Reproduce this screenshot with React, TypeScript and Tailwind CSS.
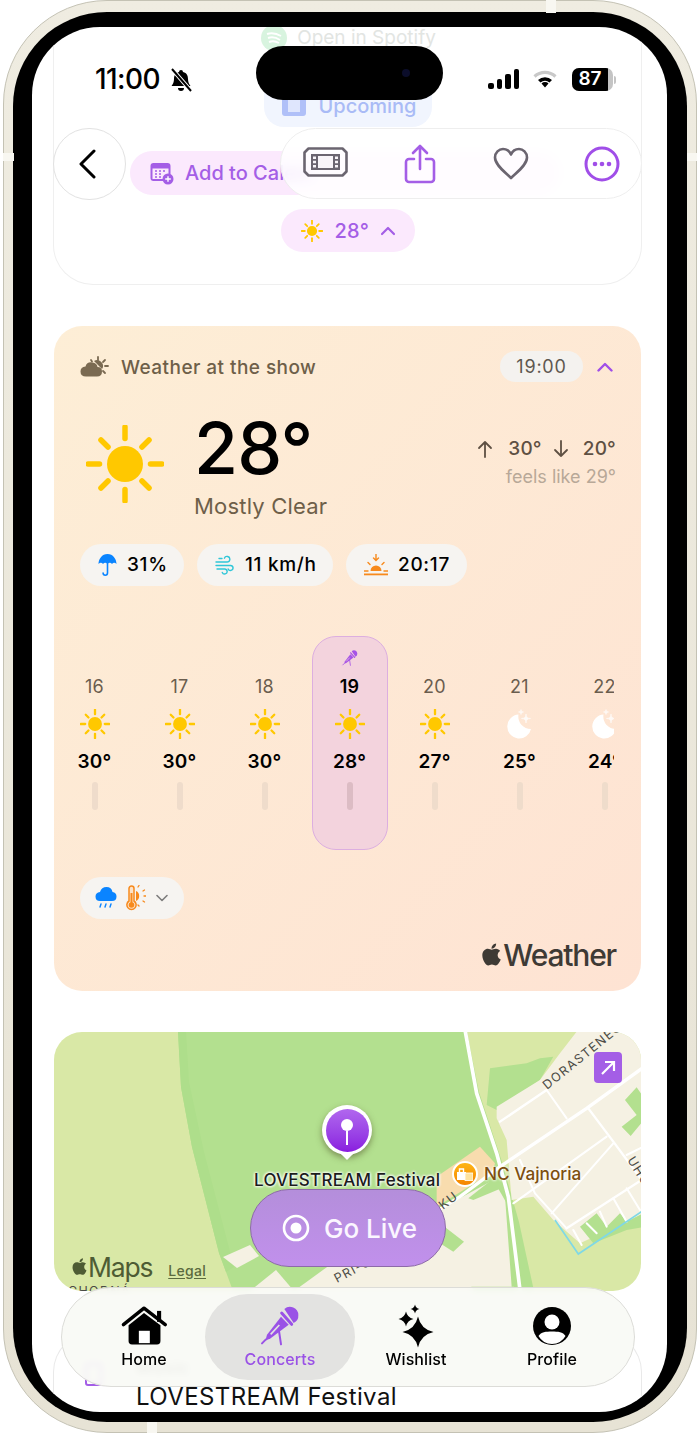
import React from "react";
import { FaApple } from "react-icons/fa";

const Sun = ({ s = 30, rw = 2.4 }: { s?: number; rw?: number }) => (
  <svg width={s} height={s} viewBox="0 0 78 78" className="shrink-0">
    <circle cx="39" cy="39" r="18" fill="#ffc800" />
    {[0, 45, 90, 135, 180, 225, 270, 315].map((a) => (
      <line key={a} x1="39" y1={a % 90 === 0 ? 13.5 : 15} x2="39" y2={a % 90 === 0 ? 2 : 5} stroke="#ffc800" strokeWidth={rw * (78 / s)} strokeLinecap="round" transform={`rotate(${a} 39 39)`} />
    ))}
  </svg>
);

const Moon = () => (
  <svg width="30" height="30" viewBox="0 0 30 30" className="shrink-0">
    <path d="M13.500 5.500 A12 12 0 1 0 26 20 A12.500 12.500 0 0 1 13.500 5.500 Z" fill="#fff" />
    <path d="M21 5 Q21 9.500 25.500 9.500 Q21 9.500 21 14 Q21 9.500 16.500 9.500 Q21 9.500 21 5Z M16 0.500 Q16 3 18.500 3 Q16 3 16 5.500 Q16 3 13.500 3 Q16 3 16 0.500Z" fill="#fff" stroke="#fff" strokeWidth="0.7" opacity="0.8" />
  </svg>
);

const Star = ({ cx, cy, r }: { cx: number; cy: number; r: number }) => {
  const k = r * 0.18;
  return <path d={`M${cx} ${cy - r} Q${cx + k} ${cy - k} ${cx + r} ${cy} Q${cx + k} ${cy + k} ${cx} ${cy + r} Q${cx - k} ${cy + k} ${cx - r} ${cy} Q${cx - k} ${cy - k} ${cx} ${cy - r}Z`} fill="#000" />;
};

const Mic = ({ w = 50, c = "#9a52e6", g = "#e3e3e1" }: { w?: number; c?: string; g?: string }) => (
  <svg width={w} height={w} viewBox="0 0 150 150" className="shrink-0">
    <path d="M88 24 A25 25 0 0 1 130 42 A25 25 0 0 1 116 66Z" fill={c} />
    <path d="M80 36 L110 70" stroke={c} strokeWidth="9" strokeLinecap="round" />
    <path d="M78 47 L101 71 L47 112 L31 119 L36 101Z" fill={c} />
    <path d="M47 100 L73 72" stroke={g} strokeWidth="5" />
    <path d="M32 116 L21 127 M72 90 L78 130" stroke={c} strokeWidth="6" strokeLinecap="round" />
  </svg>
);

const Pill = ({ children, w }: { children: React.ReactNode; w: string }) => (
  <div className={`flex h-[42px] items-center rounded-[21px] bg-[#f6f4f1] ${w}`}>{children}</div>
);

const hours = [
  ["16", "30°", "sun"],
  ["17", "30°", "sun"],
  ["18", "30°", "sun"],
  ["19", "28°", "sun"],
  ["20", "27°", "sun"],
  ["21", "25°", "moon"],
  ["22", "24°", "moon"],
];

const MapArt = () => (
  <svg viewBox="0 0 587 259" width="587" height="259" className="block">
    <rect width="587" height="259" fill="#d9e8a6" />
    <path d="M124 0 L127 55 L138 115 L165 221 L179 259 L480 259 L465 190 L448 130 L425 60 L413 0Z" fill="#b3e08f" />
    <path d="M124 0 L127 55 L138 115 L165 221 L172 240 L180 235 L150 120 L135 50 L132 0Z" fill="#aede8b" />
    <g fill="#f5f1e3">
      <path d="M169 225 L196 213 L205 224 L183 236Z" />
      <path d="M196 259 L222 238 L240 259Z" />
      <path d="M240 259 L280 230 L400 225 L420 259Z" />
    </g>
    <path d="M400 232 L416 222 L432 259 L424 259Z" fill="#b3e08f" />
    <g transform="translate(386 -2) scale(0.3333)">
      <path d="M140 225 L150 115 L260 100 L300 85 L340 80 L300 150 L170 240Z" fill="#b3e08f" />
      <path d="M410 5 L620 5 L620 545 L560 575 L420 640 L340 570 L280 500 L215 510 L200 330 L170 265 L170 230 L300 150 L360 70Z" fill="#f5f1e3" />
      <path d="M-60 570 L160 450 L200 520 L222 770 L-60 770Z" fill="#f5f1e3" />
      <path d="M0 580 L72 635 L40 665 L0 640Z" fill="#b3e08f" />
      <path d="M-10 440 L120 350 L165 400 L158 425 L-10 530Z" fill="#f8dcae" />
      <path d="M85 505 L180 430 L195 470 L100 510Z" fill="#b3e08f" />
      <path d="M185 400 L205 500 L240 770 L215 770 L195 500Z" fill="#b3e08f" />
      <path d="M555 210 L590 172 L620 215 L620 260 L572 318 L545 290 L590 255Z" fill="#b3e08f" />
      <path d="M420 590 L470 550 L500 590 L540 550 L560 575 L620 545 L620 590 L560 600 L460 640Z" fill="#b3e08f" />
      <g fill="none" stroke="#fff" strokeLinecap="round" strokeLinejoin="round">
        <path d="M75 0 L110 190 L170 370 L205 500 L240 780" strokeWidth="11" />
        <path d="M-60 575 L60 500 L180 410 L440 235 L620 105" strokeWidth="10" />
        <path d="M180 275 L320 180" strokeWidth="7" />
        <path d="M320 180 L380 265" strokeWidth="6" />
        <path d="M445 235 L520 335 L620 470" strokeWidth="7" />
        <path d="M240 390 L285 490 L380 595" strokeWidth="6" />
        <path d="M220 520 L500 320" strokeWidth="6" />
        <path d="M335 550 L520 340" strokeWidth="6" />
        <path d="M380 595 L620 440" strokeWidth="7" />
        <path d="M560 375 L620 345" strokeWidth="6" />
        <path d="M400 600 L425 645 M440 580 L470 610 M480 545 L500 590 M520 505 L560 575 M560 475 L600 540" strokeWidth="6" />
      </g>
      <path d="M345 570 L415 672 L605 545" fill="none" stroke="#7fd8e6" strokeWidth="5" />
    </g>
    <g fontFamily="Inter, sans-serif" fontSize="12.5" fill="#4b4b45" letterSpacing="1.3">
      <text transform="translate(493 58) rotate(-39)">DORASTENECKÁ</text>
      <text transform="translate(573 128) rotate(58)">UHO</text>
      <text transform="translate(389 178) rotate(-38)">KU</text>
      <text transform="translate(283 251) rotate(-28)">PRI-S</text>
      <text transform="translate(14 264)">CHODNÁ</text>
    </g>
  </svg>
);

const strip = "absolute bg-[#f8f7f1]";

export default function App() {
  return (
    <div className="relative h-[1435px] w-[700px] overflow-hidden bg-white text-black [font-family:Inter,sans-serif]">
      <div className="ml-[3px] h-[1433px] w-[694px] rounded-[104px] border border-[#c4c2b4] bg-gradient-to-b from-[#efece1] to-[#e7e3d5] px-[9px] pb-[10px] pt-[11px]">
        <div className="h-[1410px] w-[674px] rounded-[94px] bg-black px-[19px] pt-[15px]">
          <div className="relative h-[1385px] w-[635px] overflow-hidden rounded-[68px] bg-white">
            {/* top card */}
            <div className="ml-[21px] flex h-[258px] w-[589px] flex-col items-center rounded-b-[40px] border border-t-0 border-[#efefef]">
              <div className="mt-[1px] flex h-[20px] items-center gap-[10px] pl-[2px] text-[19px] text-[#dfe3df] opacity-90">
                <svg width="26" height="26" viewBox="0 0 26 26"><circle cx="13" cy="13" r="13" fill="#d4f3dc" /><path d="M6 9 Q13 7 20 11 M7 13 Q13 11 19 15 M8 17 Q13 15 18 18" stroke="#fff" strokeWidth="2" fill="none" /></svg>
                <span>Open in Spotify</span>
              </div>
              <div className="mt-[37px] flex h-[42px] w-[168px] items-center justify-center gap-[12px] rounded-b-[20px] bg-[#f1f5fe] pl-[4px] text-[20px] font-medium text-[#a9bbf6]">
                <svg width="24" height="22" viewBox="0 0 24 22"><rect x="0" y="1" width="24" height="20" rx="3" fill="#b0c0f8" /><rect x="6" y="5" width="12" height="12" fill="#dfe6fd" /></svg>
                <span>Upcoming</span>
              </div>
              <div className="ml-[-31px] mt-[24px] flex self-start">
                <div className="ml-[107px] flex h-[44px] w-[181px] items-center gap-[11px] rounded-l-[22px] bg-[#fbe9fd] pb-[1px] pl-[20px] text-[20px] font-medium text-[#a45ee6]">
                  <svg width="24" height="24" viewBox="0 0 24 24" className="shrink-0"><rect x="0.5" y="2" width="20" height="18" rx="3" fill="#a45ee6" /><rect x="2.5" y="7.500" width="16" height="10.500" fill="#fbe9fd" /><path d="M5 10h2M9 10h2M13 10h2M5 13h2M9 13h2M5 16h2M9 16h2" stroke="#a45ee6" strokeWidth="1.6" /><circle cx="18" cy="18" r="5.500" fill="#a45ee6" /><path d="M18 15.200v5.600M15.200 18h5.600" stroke="#fff" strokeWidth="1.4" /></svg>
                  <span className="whitespace-nowrap">Add to Calendar</span>
                </div>
                <div className="h-[44px] w-[250px] rounded-r-[22px] bg-[#fbe9fd]" />
              </div>
              <div className="mt-[14px] flex h-[43px] w-[134px] items-center rounded-[22px] bg-[#fbe9fd] pl-[20px] text-[20px] font-medium tracking-[0.3px] text-[#a45ee6]">
                <Sun s={22} rw={1.8} />
                <span className="ml-[12px]">28°</span>
                <svg width="16" height="10" viewBox="0 0 16 10" className="ml-[11px]"><path d="M2 8 L8 2 L14 8" fill="none" stroke="#a45ee6" strokeWidth="2.2" strokeLinecap="round" strokeLinejoin="round" /></svg>
              </div>
            </div>

            {/* weather card */}
            <div className="ml-[22px] mt-[41px] h-[665px] w-[587px] rounded-[28px] bg-gradient-to-br from-[#fdeed6] to-[#fee3d3] pl-[26px] pt-[25px]">
              <div className="flex h-[31px] items-center pr-[27px]">
                <svg width="30" height="22" viewBox="0 0 30 22" className="mr-[12px] shrink-0">
                  <path d="M6 20.500 Q0.500 20.500 0.500 15.500 Q0.500 11 5.500 10.500 Q7 5.500 12.500 6.500 Q17 7 17.500 11 Q22 11 22 15.500 Q22 20.500 17 20.500Z" fill="#7a6a52" />
                  <path d="M14 5 A6 6 0 0 1 23 11 A 6 6 0 0 1 22 13" fill="#7a6a52" />
                  <path d="M18 1v3M25 4l-2 2M28 10h-3M25 17l-2-2M11 4l1 1.500" stroke="#7a6a52" strokeWidth="1.8" strokeLinecap="round" />
                </svg>
                <span className="relative top-[1.5px] -ml-[1px] text-[19px] font-medium tracking-[0.45px] text-[#6e5f49]">Weather at the show</span>
                <div className="ml-auto flex h-[31px] w-[83px] items-center justify-center rounded-[16px] bg-[#f4f2ef] text-[18px] tracking-[0.8px] text-[#5e5850]">19:00</div>
                <svg width="16" height="10" viewBox="0 0 16 10" className="ml-[14px] mr-[1px]"><path d="M1.500 8.500 L8 2 L14.500 8.500" fill="none" stroke="#a04ee8" strokeWidth="2.4" strokeLinecap="round" strokeLinejoin="round" /></svg>
              </div>

              <div className="mt-[29px] flex h-[117px] pr-[25px]">
                <div className="ml-[6px] mt-[14px] w-[108px]"><Sun s={78} rw={5.5} /></div>
                <div>
                  <div className="mt-[1px] h-[72px] text-[71.5px] font-medium leading-[72px] tracking-[-0.8px]">28°</div>
                  <div className="mt-[8px] text-[22px] leading-[28px] tracking-[0.2px] text-[#6e5f49]">Mostly Clear</div>
                </div>
                <div className="ml-auto pt-[25px] text-right">
                  <div className="flex h-[26px] items-center justify-end text-[19px] font-medium tracking-[0.2px] text-[#5e5043]">
                    <svg width="16" height="18" viewBox="0 0 16 18"><path d="M8 17V2M2 8l6-6 6 6" fill="none" stroke="#5e5043" strokeWidth="1.8" strokeLinecap="round" strokeLinejoin="round" /></svg>
                    <span className="ml-[15px]">30°</span>
                    <svg width="16" height="18" viewBox="0 0 16 18" className="ml-[11px]"><path d="M8 1v15M2 10l6 6 6-6" fill="none" stroke="#5e5043" strokeWidth="1.8" strokeLinecap="round" strokeLinejoin="round" /></svg>
                    <span className="ml-[14px]">20°</span>
                  </div>
                  <div className="mt-[2px] text-[18px] leading-[26px] text-[#b8a898]">feels like 29°</div>
                </div>
              </div>

              <div className="mt-[16px] flex gap-[13px] text-[19px] font-medium tracking-[0.7px]">
                <Pill w="w-[104px] pl-[18px] gap-[10px]">
                  <svg width="19" height="24" viewBox="0 0 19 24" className="shrink-0"><path d="M9.500 1 C15 1 18.500 6 18.500 11 Q16 8.500 14 11 Q12 8.500 9.500 11 Q7 8.500 5 11 Q3 8.500 0.500 11 C0.500 6 4 1 9.500 1Z" fill="#0a84ff" /><path d="M9.500 10v10a2.200 2.200 0 0 1-4.400 0" fill="none" stroke="#0a84ff" strokeWidth="1.6" strokeLinecap="round" /></svg>
                  <span>31%</span>
                </Pill>
                <Pill w="w-[136px] pl-[18px] gap-[11px]">
                  <svg width="19" height="20" viewBox="0 0 19 20" className="shrink-0" fill="none" stroke="#2fc6d8" strokeWidth="1.4" strokeLinecap="round"><path d="M1 7h11a2.800 2.800 0 1 0-2.600-3.800M1 10.500h14.500a2.500 2.500 0 1 1-2.300 3.400M2 14h7.500a2.500 2.500 0 1 1-2.200 3.400M4 3.500h3" /></svg>
                  <span>11 km/h</span>
                </Pill>
                <Pill w="w-[121px] pl-[18px] gap-[10px]">
                  <svg width="24" height="22" viewBox="0 0 24 22" className="shrink-0"><path d="M6.500 17a5.500 5.500 0 0 1 11 0Z" fill="#f78a1d" /><path d="M12 0v6M9.500 4l2.500 2.500L14.500 4M4 8.500l2 2M20 8.500l-2 2M0 17h4M20 17h4" fill="none" stroke="#f78a1d" strokeWidth="1.4" strokeLinecap="round" /><rect y="19.500" width="24" height="1.800" fill="#f78a1d" /></svg>
                  <span>20:17</span>
                </Pill>
              </div>

              <div className="ml-[-28px] mt-[50px] h-[214px] w-[562px] overflow-hidden">
                <div className="flex w-[595px]">
                  {hours.map(([h, t, k], i) => {
                    const sel = i === 3;
                    return (
                      <div key={h} className="flex h-[214px] w-[85px] shrink-0 justify-center">
                        <div className={`flex h-[214px] w-[76px] flex-col items-center rounded-[24px] border pt-[12px] ${sel ? "border-[#dcaee0] bg-[#f3d3dd]" : "border-transparent"}`}>
                          <div className="flex h-[18px] items-center justify-center">{sel && <Mic w={20} c="#a552e6" g="#f3d3dd" />}</div>
                          <div className={`mt-[8px] h-[24px] text-[18px] leading-[24px] tracking-[0.3px] ${sel ? "font-semibold text-black" : "text-[#6a5d4e]"}`}>{h}</div>
                          <div className="mt-[10px] flex h-[30px] items-center">{k === "sun" ? <Sun s={30} rw={2.3} /> : <Moon />}</div>
                          <div className="mt-[10px] h-[26px] text-[19px] font-semibold leading-[26px] tracking-[0.2px]">{t}</div>
                          <div className={`mt-[7px] h-[28px] w-[6px] rounded-[3px] ${sel ? "bg-[#dcbcc4]" : "bg-[#efdccb]"}`} />
                        </div>
                      </div>
                    );
                  })}
                </div>
              </div>

              <div className="mt-[27px] flex h-[42px] w-[104px] items-center rounded-[21px] bg-[#f6f4f1] pl-[15px]">
                <svg width="22" height="24" viewBox="0 0 22 24" className="shrink-0"><path d="M5 15 Q0.500 15 0.500 10.500 Q0.500 6.500 5 6 Q6.500 1 11.500 1 Q16.500 1 17.500 6 Q21.500 6.500 21.500 10.500 Q21.500 15 17 15Z" fill="#0a84ff" /><path d="M6 18l-1 3M11 18l-1 3M16 18l-1 3" stroke="#0a84ff" strokeWidth="1.4" strokeLinecap="round" /></svg>
                <svg width="20" height="26" viewBox="0 0 20 26" className="ml-[9px] shrink-0"><path d="M3 3.500a2.500 2.500 0 0 1 5 0v12.500a4.600 4.600 0 1 1-5 0Z" fill="#fde3c8" stroke="#f78a1d" strokeWidth="1.5" /><circle cx="5.500" cy="20" r="2.800" fill="#f78a1d" /><path d="M5.500 8v10" stroke="#f78a1d" strokeWidth="2" /><path d="M10 6a5.500 5.500 0 0 1 0 10Z" fill="#f78a1d" /><path d="M12 2l1-1.500M17 6l1.500-1M18 11h2M17 16l1.500 1M12 20l1 1" stroke="#f78a1d" strokeWidth="1.3" strokeLinecap="round" /></svg>
                <svg width="12" height="8" viewBox="0 0 12 8" className="ml-[10px] shrink-0"><path d="M1 1.500l5 5 5-5" fill="none" stroke="#7d7d7d" strokeWidth="1.6" strokeLinecap="round" strokeLinejoin="round" /></svg>
              </div>

              <div className="mt-[18px] flex h-[36px] items-center justify-end pr-[25px] text-[#3e3a35]">
                <FaApple size={25} className="mb-[2px] mr-[-1px]" />
                <span className="text-[30px] font-medium leading-[36px] tracking-[-1.2px]">Weather</span>
              </div>
            </div>

            {/* map */}
            <div className="relative ml-[22px] mt-[41px] h-[259px] w-[587px] overflow-hidden rounded-[28px]">
              <MapArt />
              <div className="absolute left-[540px] top-[20px] flex h-[31px] w-[28px] items-center justify-center rounded-[4px] bg-[#a45ee6]">
                <svg width="16" height="16" viewBox="0 0 16 16"><path d="M2 14L14 2M5 2h9v9" fill="none" stroke="#fff" strokeWidth="2.2" /></svg>
              </div>
              <div className="absolute left-[268px] top-[73px] h-[56px] w-[50px]">
                <div className="flex h-[50px] w-[50px] items-center justify-center rounded-full bg-white shadow-[0_3px_6px_rgba(70,70,30,0.5)]">
                  <div className="flex h-[43px] w-[43px] flex-col items-center rounded-full bg-gradient-to-b from-[#b166ee] to-[#8a1bdf] pt-[10px]">
                    <div className="h-[12px] w-[12px] rounded-full bg-white" />
                    <div className="h-[14px] w-[2px] bg-white" />
                  </div>
                </div>
                <div className="mx-auto -mt-[1px] h-0 w-0 border-x-[6px] border-t-[6px] border-x-transparent border-t-white" />
              </div>
              <div className="absolute left-[200px] top-[137px] whitespace-nowrap text-[17px] font-medium leading-[22px] tracking-[0.25px] text-[#1c1c1c] [text-shadow:0_0_3px_#fff,0_0_3px_#fff,0_0_3px_#fff]">LOVESTREAM Festival</div>
              <div className="absolute left-[398px] top-[129px] flex h-[26px] w-[26px] items-center justify-center rounded-full border-[2px] border-white bg-gradient-to-b from-[#fdb515] to-[#f58400]">
                <svg width="16" height="14" viewBox="0 0 16 14"><rect x="0" y="5" width="9" height="8" fill="#fff" /><path d="M2.500 5V2h4v3" fill="none" stroke="#fff" strokeWidth="1.4" /><rect x="8" y="6" width="8" height="7.500" fill="#fde3a0" stroke="#fff" strokeWidth="0.8" /></svg>
              </div>
              <div className="absolute left-[430px] top-[131px] whitespace-nowrap text-[17.2px] font-medium leading-[22px] text-[#7d4f10] [text-shadow:0_0_3px_#fff,0_0_3px_#fff]">NC Vajnoria</div>
              <div className="absolute left-[16px] top-[219px] flex items-center text-[#4e5c34]">
                <FaApple size={19} className="mb-[2px] mr-[-1px]" />
                <span className="text-[26.5px] leading-[32px] tracking-[-1.2px]">Maps</span>
                <span className="ml-[16px] mt-[6px] text-[14px] font-medium tracking-[0.3px] text-[#5a6a3e] underline underline-offset-2">Legal</span>
              </div>
            </div>

            {/* next card */}
            <div className="relative ml-[21px] mt-[41px] h-[90px] w-[589px] rounded-t-[40px] border border-b-0 border-[#e9e9e9] pl-[82px] pt-[49px] text-[24px] leading-[30px] tracking-[0.4px] text-[#111]">
              <div className="absolute left-[31px] top-[30px] h-[23px] w-[17px] rounded-[3px] border-2 border-[#a45ee6]" />
              <div className="absolute left-[82px] top-[24px] text-[18px] font-medium leading-[22px] text-[#8f8f8f]">Music</div>
              LOVESTREAM Festival
            </div>

            {/* status bar */}
            <div className="absolute left-[224px] top-[19px] flex h-[54px] w-[187px] items-center justify-end rounded-[27px] bg-black pr-[33px]">
              <div className="h-[8px] w-[8px] rounded-full bg-[#0b0d2a]" />
            </div>
            <div className="absolute left-[63px] top-[35px] text-[28px] font-medium leading-[34px] tracking-[-0.6px]">11:00</div>
            <svg className="absolute left-[138px] top-[41px]" width="22" height="24" viewBox="0 0 22 24">
              <path d="M11 2a2 2 0 0 1 2 2c4 1 5 4 5 7 0 3 1 5 2.500 7H1.500C3 16 4 14 4 11c0-3 1-6 5-7a2 2 0 0 1 2-2Z" fill="#000" />
              <path d="M8 20a3 3 0 0 0 6 0Z" fill="#000" />
              <path d="M2 1l19 22" stroke="#fff" strokeWidth="4" />
              <path d="M2 1l19 22" stroke="#000" strokeWidth="2" />
            </svg>
            <div className="absolute left-[456px] top-[42px] flex h-[20px] items-end gap-[3px]">
              {[6, 10, 15, 20].map((h) => (
                <div key={h} className="w-[5.5px] rounded-[2px] bg-black" style={{ height: h }} />
              ))}
            </div>
            <svg className="absolute left-[501px] top-[42px]" width="24" height="20" viewBox="0 0 24 20">
              <path d="M1.500 7.500a15.500 15.500 0 0 1 21 0" fill="none" stroke="#c9c9c9" strokeWidth="3.200" />
              <path d="M5 11a10.500 10.500 0 0 1 14 0l-2.500 2.500a7 7 0 0 0-9 0Z" fill="#000" />
              <path d="M8.500 14.500a5 5 0 0 1 7 0L12 18.500Z" fill="#000" />
            </svg>
            <div className="absolute left-[540px] top-[41px] flex items-center">
              <div className="relative h-[23px] w-[41px] overflow-hidden rounded-[7px] bg-[#c4c4c4]">
                <div className="flex h-[23px] w-[36px] items-center justify-center bg-black text-[19px] font-semibold text-white">87</div>
              </div>
              <div className="ml-[1px] h-[8px] w-[2px] rounded-r-[2px] bg-[#c4c4c4]" />
            </div>

            {/* nav floats */}
            <div className="absolute left-[21px] top-[101px] flex h-[72px] w-[73px] items-center justify-center rounded-full border border-[#e2e2e2] bg-white/95">
              <svg width="20" height="30" viewBox="0 0 20 30" className="-ml-[6px] -mt-[1px]"><path d="M17 2L4 15l13 13" fill="none" stroke="#000" strokeWidth="3" strokeLinecap="round" strokeLinejoin="round" /></svg>
            </div>
            <div className="absolute left-[248px] top-[101px] flex h-[71px] w-[362px] items-center rounded-[36px] border border-[#eeeeee] bg-white/85 pl-[22px] backdrop-blur-[6px]">
              <svg width="45" height="30" viewBox="0 0 45 30" className="-mt-[3px] shrink-0">
                <path d="M5.500 1.500H39.500L43.500 5.500V24.500L39.500 28.500H5.500L1.500 24.500V5.500Z" fill="none" stroke="#6b6570" strokeWidth="2.600" strokeLinejoin="round" />
                <rect x="8" y="7" width="29" height="16" fill="#6b6570" />
                <rect x="15" y="9" width="15" height="12" fill="#f8f4f8" />
                <path d="M10 9.500h3v2.500h-3ZM10 13.800h3v2.500h-3ZM10 18h3v2.500h-3ZM32 9.500h3v2.500h-3ZM32 13.800h3v2.500h-3ZM32 18h3v2.500h-3Z" fill="#f8f4f8" />
              </svg>
              <svg width="32" height="40" viewBox="0 0 32 40" className="ml-[56px] shrink-0" fill="none" stroke="#a45ee6" strokeWidth="2.600" strokeLinecap="round" strokeLinejoin="round">
                <path d="M10 15H5a3 3 0 0 0-3 3v17a3 3 0 0 0 3 3h22a3 3 0 0 0 3-3V18a3 3 0 0 0-3-3h-5M16 25V2M9 9l7-7 7 7" />
              </svg>
              <svg width="36" height="33" viewBox="0 0 36 33" className="ml-[57px] shrink-0" fill="none" stroke="#6b6570" strokeWidth="2.600" strokeLinejoin="round">
                <path d="M18 31C12 25 2 18 2 10.500 2 5.500 6 2 10 2c3.500 0 6.500 2 8 5.500C19.500 4 22.500 2 26 2c4 0 8 3.500 8 8.500C34 18 24 25 18 31Z" />
              </svg>
              <svg width="36" height="36" viewBox="0 0 36 36" className="ml-[55px] shrink-0">
                <circle cx="18" cy="18" r="16" fill="none" stroke="#a04ee8" strokeWidth="3" />
                <circle cx="11" cy="18" r="2.300" fill="#a04ee8" /><circle cx="18" cy="18" r="2.300" fill="#a04ee8" /><circle cx="25" cy="18" r="2.300" fill="#a04ee8" />
              </svg>
            </div>

            {/* go live */}
            <div className="absolute left-[218px] top-[1162px] flex h-[78px] w-[196px] items-center justify-center gap-[14px] rounded-[39px] border border-[#8d6aa8] bg-gradient-to-b from-[#b48edb] to-[#c190ec] pl-[3px] text-[26px] font-medium text-[#fbf6ff]">
              <svg width="28" height="28" viewBox="0 0 28 28" className="shrink-0"><circle cx="14" cy="14" r="12" fill="none" stroke="#fff" strokeWidth="2.600" /><circle cx="14" cy="14" r="5.500" fill="#fff" /></svg>
              <span>Go Live</span>
            </div>

            {/* tab bar */}
            <div className="absolute left-[29px] top-[1260px] grid h-[100px] w-[574px] grid-cols-[136px_136px_136px_136px] rounded-[50px] border border-[#dcdcd8] bg-[#f8f9f5]/90 pl-[14px] backdrop-blur-[3px]">
              <div className="flex flex-col items-center pt-[15px]">
                <div className="flex h-[46px] items-center">
                  <svg width="48" height="43" viewBox="180 45 140 125">
                    <path d="M190 102 L250 54 L312 102" fill="none" stroke="#000" strokeWidth="10" strokeLinecap="round" strokeLinejoin="round" />
                    <rect x="288" y="62" width="12" height="32" fill="#000" />
                    <path d="M205 104 L250 68 L298 104 V150 Q298 160 288 160 H215 Q205 160 205 150Z" fill="#000" />
                    <rect x="235" y="120" width="32" height="36" fill="#fff" />
                  </svg>
                </div>
                <span className="text-[16px] font-medium leading-[20px] tracking-[0.1px]">Home</span>
              </div>
              <div className="relative flex flex-col items-center pt-[15px]">
                <div className="absolute -left-[7px] top-[6px] h-[86px] w-[150px] rounded-[43px] bg-[#e3e3e1]" />
                <div className="relative flex flex-col items-center">
                  <div className="flex h-[46px] items-center"><Mic w={50} /></div>
                  <span className="text-[16px] font-medium leading-[20px] tracking-[0.1px] text-[#9a52e6]">Concerts</span>
                </div>
              </div>
              <div className="flex flex-col items-center pt-[15px]">
                <div className="flex h-[46px] items-center">
                  <svg width="36" height="44" viewBox="0 0 36 44">
                    <Star cx={20} cy={28} r={15.5} />
                    <Star cx={8} cy={15} r={7.5} />
                    <Star cx={17} cy={5} r={4.500} />
                  </svg>
                </div>
                <span className="text-[16px] font-medium leading-[20px] tracking-[0.1px]">Wishlist</span>
              </div>
              <div className="flex flex-col items-center pt-[15px]">
                <div className="flex h-[46px] items-center">
                  <svg width="38" height="38" viewBox="0 0 38 38">
                    <circle cx="19" cy="19" r="19" fill="#000" />
                    <circle cx="19" cy="15" r="7.500" fill="#fff" />
                    <path d="M5.500 29 C8 25 13 24.500 19 24.500 S30 25 32.500 29 A15.500 15.500 0 0 1 5.500 29Z" fill="#fff" />
                  </svg>
                </div>
                <span className="text-[16px] font-medium leading-[20px] tracking-[0.1px]">Profile</span>
              </div>
            </div>
          </div>
        </div>
      </div>
      <div className={`${strip} left-[546px] top-0 h-[13px] w-[10px]`} />
      <div className={`${strip} left-[3px] top-[153px] h-[8px] w-[11px]`} />
      <div className={`${strip} left-[687px] top-[153px] h-[8px] w-[10px]`} />
      <div className={`${strip} left-[147px] top-[1422px] h-[11px] w-[10px]`} />
    </div>
  );
}
